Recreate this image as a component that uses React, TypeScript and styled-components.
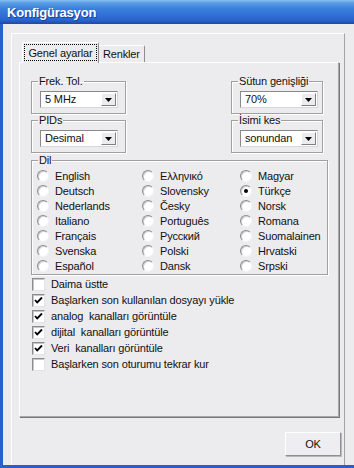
import React from "react";
import styled, { createGlobalStyle } from "styled-components";

const GlobalStyle = createGlobalStyle`
  html, body {
    margin: 0;
    padding: 0;
    background: #ecebee;
  }
  body {
    font-family: "Liberation Sans", Arial, sans-serif;
    font-size: 11px;
    letter-spacing: -0.15px;
    color: #111;
  }
  * {
    box-sizing: border-box;
  }
`;

const languages = [
  ["English", "Ελληνικό", "Magyar"],
  ["Deutsch", "Slovensky", "Türkçe"],
  ["Nederlands", "Česky", "Norsk"],
  ["Italiano", "Português", "Romana"],
  ["Français", "Русский", "Suomalainen"],
  ["Svenska", "Polski", "Hrvatski"],
  ["Español", "Dansk", "Srpski"],
];

const options = [
  { label: "Daima üstte", checked: false },
  { label: "Başlarken son kullanılan dosyayı yükle", checked: true },
  { label: "analog  kanalları görüntüle", checked: true },
  { label: "dijital  kanalları görüntüle", checked: true },
  { label: "Veri  kanalları görüntüle", checked: true },
  { label: "Başlarken son oturumu tekrar kur", checked: false },
];

function Combo({ value }: { value: string }) {
  return (
    <ComboBox>
      <ComboText>{value}</ComboText>
      <DropButton>
        <svg width="7" height="4" viewBox="0 0 7 4">
          <path d="M0 0h7L3.5 4z" fill="#000" />
        </svg>
      </DropButton>
    </ComboBox>
  );
}

function Radio({ label, checked }: { label: string; checked?: boolean }) {
  return (
    <RadioRow>
      <RadioCircle>{checked && <RadioDot />}</RadioCircle>
      <span>{label}</span>
    </RadioRow>
  );
}

function Check({ label, checked }: { label: string; checked: boolean }) {
  return (
    <CheckRow>
      <CheckBox>
        {checked && (
          <svg width="9" height="9" viewBox="0 0 9 9">
            <path
              d="M1 4l2.2 2.4L8 1.5"
              fill="none"
              stroke="#000"
              strokeWidth="1.8"
            />
          </svg>
        )}
      </CheckBox>
      <span>{label}</span>
    </CheckRow>
  );
}

export default function App() {
  return (
    <>
      <GlobalStyle />
      <Window>
        <TitleBar>Konfigürasyon</TitleBar>
        <Client>
          <Outer>
            <TabStrip>
              <ActiveTab>
                <FocusBox>Genel ayarlar</FocusBox>
              </ActiveTab>
              <Tab>Renkler</Tab>
            </TabStrip>
            <Panel>
              <TopRow>
                <Column $width={95}>
                  <Group>
                    <Legend>Frek. Tol.</Legend>
                    <Combo value="5 MHz" />
                  </Group>
                  <Group>
                    <Legend>PIDs</Legend>
                    <Combo value="Desimal" />
                  </Group>
                </Column>
                <Column $width={92}>
                  <Group>
                    <Legend>Sütun genişliği</Legend>
                    <Combo value="70%" />
                  </Group>
                  <Group>
                    <Legend>İsimi kes</Legend>
                    <Combo value="sonundan" />
                  </Group>
                </Column>
              </TopRow>
              <LangGroup>
                <Legend>Dil</Legend>
                <RadioGrid>
                  {languages.flat().map((name) => (
                    <Radio key={name} label={name} checked={name === "Türkçe"} />
                  ))}
                </RadioGrid>
              </LangGroup>
              <CheckList>
                {options.map((o) => (
                  <Check key={o.label} label={o.label} checked={o.checked} />
                ))}
              </CheckList>
            </Panel>
            <Footer>
              <Button>OK</Button>
            </Footer>
          </Outer>
        </Client>
      </Window>
    </>
  );
}

const Window = styled.div`
  width: 354px;
  height: 468px;
  display: flex;
  flex-direction: column;
  border-left: 3px solid #2a5fd0;
  border-bottom: 3px solid #2b5ecb;
  background: #ecebee;
`;

const TitleBar = styled.div`
  height: 24px;
  flex: none;
  margin-left: -3px;
  padding: 2px 0 0 7px;
  line-height: 22px;
  font-size: 13px;
  font-weight: bold;
  letter-spacing: -0.2px;
  color: #fff;
  text-shadow: 1px 1px 0 #1b3f96;
  background: linear-gradient(
    to bottom,
    #86c0f0 0%,
    #5b9ee6 12%,
    #3a80dc 35%,
    #2f6fd6 65%,
    #2a62cc 85%,
    #1f47a4 100%
  );
`;

const Client = styled.div`
  flex: 1;
  padding: 9px 0 0 8px;
  display: flex;
`;

const Outer = styled.div`
  width: 334px;
  border-top: 1px solid #fff;
  border-left: 1px solid #fff;
  border-right: 1px solid #a3a3a6;
  padding: 8px 4px 0 7px;
  display: flex;
  flex-direction: column;
`;

const TabStrip = styled.div`
  height: 20px;
  display: flex;
  align-items: flex-end;
  padding-left: 3px;
  position: relative;
  z-index: 1;
`;

const ActiveTab = styled.div`
  width: 77px;
  height: 21px;
  margin-bottom: -1px;
  padding: 1px 1px 2px 1px;
  background: #ecebee;
  border-top: 1px solid #fff;
  border-left: 1px solid #fff;
  border-right: 1px solid #8e8e91;
  border-radius: 2px 2px 0 0;
`;

const FocusBox = styled.div`
  height: 100%;
  border: 1px dotted #000;
  display: flex;
  align-items: center;
  justify-content: center;
  padding-top: 1px;
`;

const Tab = styled.div`
  width: 46px;
  height: 17px;
  padding-left: 4px;
  display: flex;
  align-items: center;
  border-top: 1px solid #fff;
  border-right: 1px solid #8e8e91;
  border-radius: 0 2px 0 0;
`;

const Panel = styled.div`
  width: 320px;
  height: 355px;
  padding: 12px 10px 0 11px;
  border-top: 1px solid #fff;
  border-left: 1px solid #fff;
  border-right: 1px solid #a8a8ab;
  border-bottom: 1px solid #a8a8ab;
  box-shadow: 1px 1px 0 #77777a;
`;

const TopRow = styled.div`
  display: flex;
  justify-content: space-between;
  padding-right: 5px;
`;

const Column = styled.div<{ $width: number }>`
  width: ${(p) => p.$width}px;
  display: flex;
  flex-direction: column;
`;

const Group = styled.fieldset`
  margin: 0;
  padding: 3px 6px 5px 6px;
  border: 1px solid #a0a0a3;
  box-shadow: 1px 1px 0 #fff, inset 1px 1px 0 #fff;
  min-width: 0;
`;

const Legend = styled.legend`
  padding: 0 1px;
  line-height: 13px;
  font-size: 11px;
`;

const LangGroup = styled(Group)`
  margin-top: 1px;
  padding: 1px 6px 1px 6px;
`;

const ComboBox = styled.div`
  width: 78px;
  height: 17px;
  margin-left: 2px;
  display: flex;
  align-items: center;
  background: #fff;
  border: 1px solid;
  border-color: #8a8a8d #d8d8db #d8d8db #8a8a8d;
  padding: 1px;
`;

const ComboText = styled.span`
  flex: 1;
  padding-left: 3px;
  font-size: 11px;
  line-height: 13px;
  white-space: nowrap;
  overflow: hidden;
`;

const DropButton = styled.div`
  width: 15px;
  height: 13px;
  flex: none;
  display: flex;
  align-items: center;
  justify-content: center;
  background: #ecebee;
  border: 1px solid;
  border-color: #fff #808083 #808083 #fff;
`;

const RadioGrid = styled.div`
  display: grid;
  grid-template-columns: 105px 98px 1fr;
  grid-auto-rows: 15px;
  margin-left: -1px;
`;

const RadioRow = styled.div`
  display: flex;
  align-items: center;
  gap: 6px;
  font-size: 11px;
  white-space: nowrap;
`;

const RadioCircle = styled.span`
  width: 12px;
  height: 12px;
  flex: none;
  border-radius: 50%;
  background: #fff;
  border: 1px solid;
  border-color: #8c8c8f #f4f4f6 #f4f4f6 #8c8c8f;
  box-shadow: inset 1px 1px 0 #cfcfd2;
  display: flex;
  align-items: center;
  justify-content: center;
`;

const RadioDot = styled.span`
  width: 4px;
  height: 4px;
  border-radius: 50%;
  background: #000;
`;

const CheckList = styled.div`
  margin-top: 1px;
  padding-left: 1px;
  display: flex;
  flex-direction: column;
`;

const CheckRow = styled.div`
  height: 16px;
  display: flex;
  align-items: center;
  gap: 6px;
  font-size: 11px;
  white-space: pre;
`;

const CheckBox = styled.span`
  width: 13px;
  height: 13px;
  flex: none;
  background: #fff;
  border: 1px solid;
  border-color: #8c8c8f #e2e2e5 #e2e2e5 #8c8c8f;
  box-shadow: inset 1px 1px 0 #c8c8cb;
  display: flex;
  align-items: center;
  justify-content: center;
`;

const Footer = styled.div`
  display: flex;
  justify-content: flex-end;
  padding-top: 15px;
  margin-right: -1px;
`;

const Button = styled.div`
  width: 56px;
  height: 24px;
  display: flex;
  align-items: center;
  justify-content: center;
  font-size: 11px;
  background: #eeedf1;
  border: 1px solid;
  border-color: #fff #909093 #909093 #fff;
  box-shadow: 1px 1px 0 #b8b8bb;
`;
